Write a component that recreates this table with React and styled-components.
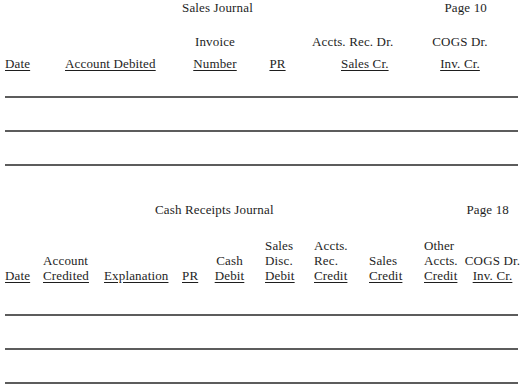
import React from 'react'
import styled, { createGlobalStyle } from 'styled-components'

const GlobalStyle = createGlobalStyle`
  html, body {
    margin: 0;
    padding: 0;
    background: #fff;
  }
  body {
    font-family: "Liberation Serif", "Times New Roman", serif;
    font-size: 13px;
    color: #1e1e1e;
    letter-spacing: 0.15px;
  }
`

const Page = styled.div`
  width: 524px;
  height: 386px;
  overflow: hidden;
`

const Journal = styled.section`
  display: flex;
  flex-direction: column;
  padding-top: ${p => p.$top}px;
`

const TitleRow = styled.div`
  display: flex;
  align-items: center;
  line-height: 15px;
  height: 15px;
`

const Title = styled.div`
  margin-left: ${p => p.$left}px;
`

const PageNo = styled.div`
  margin-left: auto;
  margin-right: ${p => p.$right}px;
`

const HeaderGrid = styled.div`
  display: grid;
  grid-template-columns: ${p => p.$cols};
  margin-top: ${p => p.$gap}px;
  padding-left: 5px;
  line-height: ${p => p.$lh}px;
  white-space: nowrap;
`

const Head = styled.div`
  display: flex;
  flex-direction: column;
  justify-content: flex-end;
  align-items: ${p => (p.$center ? 'center' : 'flex-start')};
  padding-left: ${p => p.$pad || 0}px;
`

const Line = styled.span`
  padding-left: ${p => p.$indent || 0}px;
  text-decoration: ${p => (p.$u ? 'underline' : 'none')};
  text-underline-offset: 2px;
  text-decoration-thickness: 1px;
`

const Rules = styled.div`
  display: flex;
  flex-direction: column;
  gap: 32px;
  margin-top: ${p => p.$gap}px;
  padding: 0 6px 0 5px;
`

const Rule = styled.div`
  height: 2px;
  background: #5c5c5c;
`

const salesCols = '60px 115px 70px 55px 110px 90px'
const cashCols = '38px 61px 78px 32px 31px 20px 49px 55px 55px 38px 61px'

const App = () => {
  return (
    <Page>
      <GlobalStyle />

      <Journal $top={0}>
        <TitleRow>
          <Title $left={182}>Sales Journal</Title>
          <PageNo $right={37}>Page 10</PageNo>
        </TitleRow>
        <HeaderGrid $cols={salesCols} $gap={16} $lh={22}>
          <Head><Line $u>Date</Line></Head>
          <Head><Line $u>Account Debited</Line></Head>
          <Head $center><Line>Invoice</Line><Line $u>Number</Line></Head>
          <Head $center><Line $u>PR</Line></Head>
          <Head $pad={7}><Line>Accts. Rec. Dr.</Line><Line $u $indent={29}>Sales Cr.</Line></Head>
          <Head $center><Line>COGS Dr.</Line><Line $u>Inv. Cr.</Line></Head>
        </HeaderGrid>
        <Rules $gap={21}>
          <Rule />
          <Rule />
          <Rule />
        </Rules>
      </Journal>

      <Journal $top={36}>
        <TitleRow>
          <Title $left={155}>Cash Receipts Journal</Title>
          <PageNo $right={15}>Page 18</PageNo>
        </TitleRow>
        <HeaderGrid $cols={cashCols} $gap={21} $lh={15}>
          <Head><Line $u>Date</Line></Head>
          <Head><Line>Account</Line><Line $u>Credited</Line></Head>
          <Head><Line $u>Explanation</Line></Head>
          <Head><Line $u>PR</Line></Head>
          <Head $center><Line>Cash</Line><Line $u>Debit</Line></Head>
          <Head />
          <Head><Line>Sales</Line><Line>Disc.</Line><Line $u>Debit</Line></Head>
          <Head><Line>Accts.</Line><Line>Rec.</Line><Line $u>Credit</Line></Head>
          <Head><Line>Sales</Line><Line $u>Credit</Line></Head>
          <Head><Line>Other</Line><Line>Accts.</Line><Line $u>Credit</Line></Head>
          <Head $center><Line>COGS Dr.</Line><Line $u>Inv. Cr.</Line></Head>
        </HeaderGrid>
        <Rules $gap={31}>
          <Rule />
          <Rule />
          <Rule />
        </Rules>
      </Journal>
    </Page>
  )
}

export default App
